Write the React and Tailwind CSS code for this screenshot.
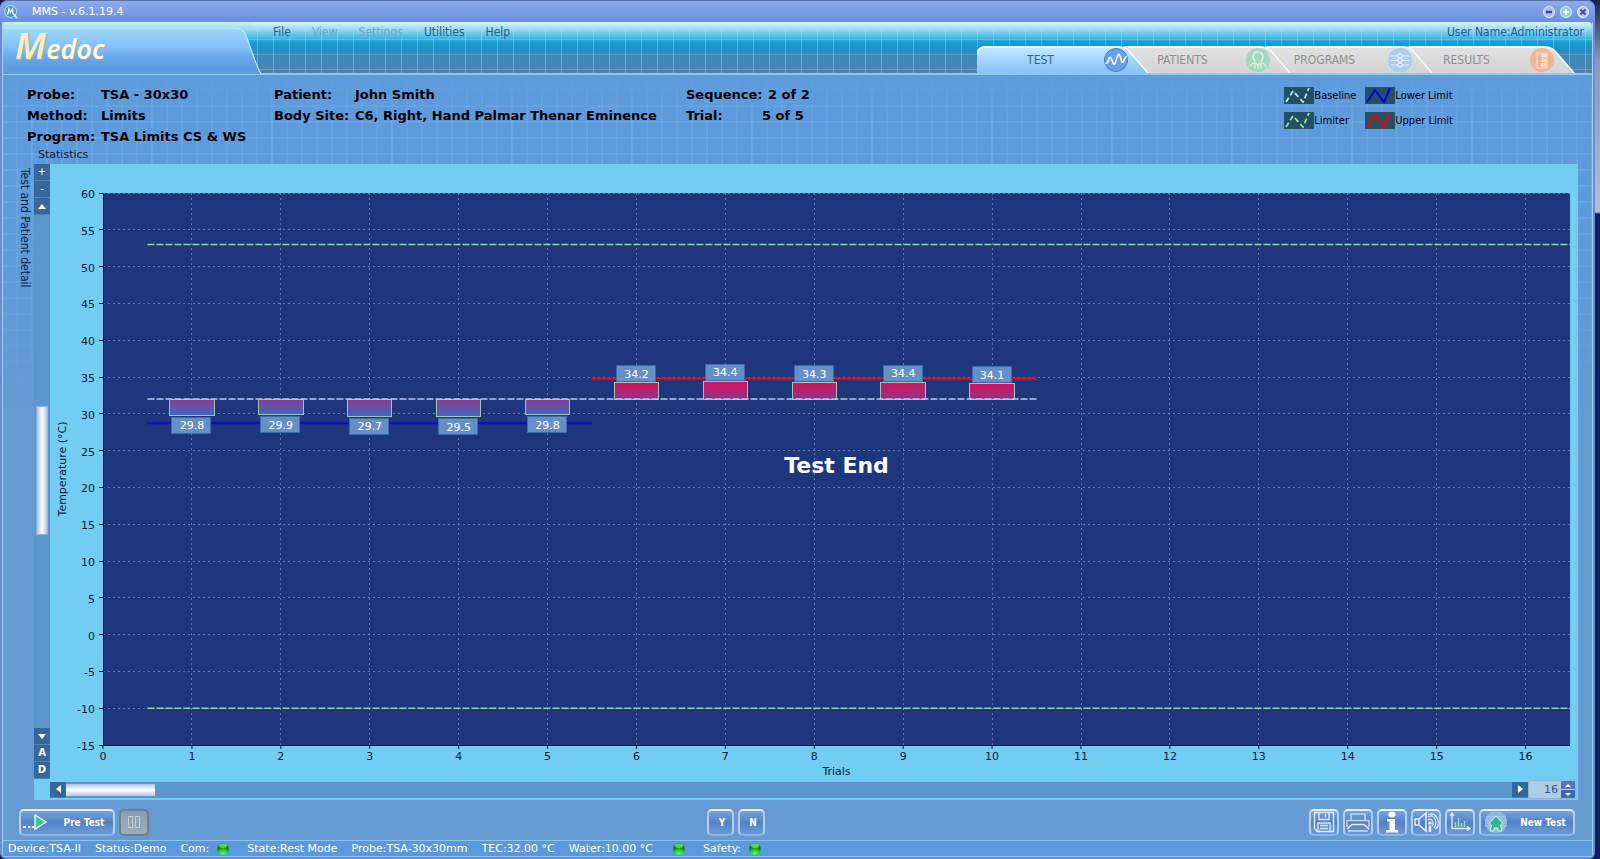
import { useState } from 'react';

const Y_MAX = 60;
const Y_MIN = -15;
const X_MAX = 16.5;

const px = (v) => `${(v / X_MAX) * 100}%`;
const py = (v) => `${((Y_MAX - v) / (Y_MAX - Y_MIN)) * 100}%`;

const yTicks = [60, 55, 50, 45, 40, 35, 30, 25, 20, 15, 10, 5, 0, -5, -10, -15];
const xTicks = [0, 1, 2, 3, 4, 5, 6, 7, 8, 9, 10, 11, 12, 13, 14, 15, 16];

const trials = [
  { n: 1, label: '29.8', value: 29.8 },
  { n: 2, label: '29.9', value: 29.9 },
  { n: 3, label: '29.7', value: 29.7 },
  { n: 4, label: '29.5', value: 29.6 },
  { n: 5, label: '29.8', value: 29.9 },
  { n: 6, label: '34.2', value: 34.2 },
  { n: 7, label: '34.4', value: 34.4 },
  { n: 8, label: '34.3', value: 34.2 },
  { n: 9, label: '34.4', value: 34.3 },
  { n: 10, label: '34.1', value: 34.1 },
];
const BASELINE = 32;

const menus = [
  { name: 'File' },
  { name: 'View', disabled: true },
  { name: 'Settings', disabled: true },
  { name: 'Utilities' },
  { name: 'Help' },
];

// Title bar ---------------------------------------------------------------

function WindowButton({ label, glow, children }) {
  return (
    <button aria-label={label} className="w-3 h-3">
      <svg viewBox="0 0 12 12" className="w-3 h-3">
        <circle cx="6" cy="6" r="5.5" fill={glow} stroke="#e8f0ff" />
        {children}
      </svg>
    </button>
  );
}

function TitleBar() {
  return (
    <div className="h-[22px] rounded-t-lg border-t border-[#5870a8] bg-linear-to-b from-[#8cabea] to-[#688fdf] flex items-center pl-1 pr-[6px]">
      <svg viewBox="0 0 14 14" className="w-[14px] h-[14px]">
        <circle cx="6.5" cy="6.5" r="6" fill="#3d9fb8" stroke="#bfe6ee" />
        <path d="M3.5 9.5 L5 4 L6.5 7.5 L8.5 4 L9 9" fill="none" stroke="#fff" strokeWidth="1.4" />
        <path d="M9.5 9 L13 13" stroke="#dff2f6" strokeWidth="1.6" />
      </svg>
      <h1 className="ml-[14px] text-[11px] leading-none font-medium text-white">MMS - v.6.1.19.4</h1>
      <div className="ml-auto flex gap-[5px]">
        <WindowButton label="Minimize" glow="#b4bcec">
          <path d="M3 6 H9" stroke="#2f4aa0" strokeWidth="2.4" />
        </WindowButton>
        <WindowButton label="Maximize" glow="#86d4d8">
          <path d="M3 6 H9 M6 3 V9" stroke="#fff" strokeWidth="1.8" />
        </WindowButton>
        <WindowButton label="Close" glow="#c2c8ee">
          <path d="M3.5 3.5 L8.5 8.5 M8.5 3.5 L3.5 8.5" stroke="#3c4da0" strokeWidth="2" />
        </WindowButton>
      </div>
    </div>
  );
}

// Header ------------------------------------------------------------------

function Logo() {
  return (
    <div className="relative w-[262px] h-[52px] shrink-0">
      <svg viewBox="0 0 262 52" className="absolute inset-0 w-full h-full">
        <defs>
          <linearGradient id="logoBg" x1="0" y1="0" x2="0" y2="1">
            <stop offset="0" stopColor="#9fd8fb" />
            <stop offset="0.45" stopColor="#80bdf8" />
            <stop offset="0.65" stopColor="#66a8ee" />
            <stop offset="0.85" stopColor="#5d9bdd" />
            <stop offset="1" stopColor="#5f9ddd" />
          </linearGradient>
          <linearGradient id="logoTop" x1="0" y1="0" x2="0" y2="1">
            <stop offset="0" stopColor="#c9f5fb" />
            <stop offset="1" stopColor="#8fdcf4" />
          </linearGradient>
        </defs>
        <path d="M0 0 H250 V6 H0 Z" fill="url(#logoTop)" opacity="0.6" />
        <path d="M0 52 V6 H232 C239 6 241 9 244 16 C248 27 252 41 258 52 Z" fill="url(#logoBg)" />
        <path d="M0 6 H232 C239 6 241 9 244 16 C248 27 252 41 258 52" fill="none" stroke="#b9ecfa" strokeWidth="1.2" />
      </svg>
      <p className="relative pl-3 pt-1 font-['Noto_Sans','Open_Sans',sans-serif] font-semibold italic text-[27px] leading-10 text-[#fbfaf0] [text-shadow:1px_1px_1px_#b3a77e]">
        <span className="text-[36px] text-[#f4efcb]">M</span>edoc
      </p>
    </div>
  );
}

function WaveIcon() {
  return (
    <svg viewBox="0 0 24 24" className="w-6 h-6 shrink-0">
      <circle cx="12" cy="12" r="11.5" fill="#67a2e4" stroke="#4a7fc4" />
      <path d="M1.500 15 Q3.500 16 4.500 12 T7 10 L9.500 16 Q10.500 17 11.500 14 L14 7 Q15 5 16 8 L18 14 Q19 16 20.500 11 L22.500 8" fill="none" stroke="#fff" strokeWidth="1.5" />
    </svg>
  );
}

function PatientIcon() {
  return (
    <svg viewBox="0 0 24 24" className="w-6 h-6 shrink-0">
      <circle cx="12" cy="12" r="12" fill="#a2d8ba" />
      <path d="M4 19 C4 15 9 16 9 13 C6 10 6 4 12 4 S18 10 15 13 C15 16 20 15 20 19 M9 15 V21 M15 15 V21 M10 15 L12 18 L14 15 M12 18 V21" fill="none" stroke="#dff3e6" strokeWidth="1.3" />
    </svg>
  );
}

function ProgramIcon() {
  return (
    <svg viewBox="0 0 24 24" className="w-6 h-6 shrink-0">
      <circle cx="12" cy="12" r="12" fill="#a9cdec" />
      <path d="M3 8 H21 M3 12.500 H21 M3 17 H21 M12 4 V20" fill="none" stroke="#e2f0fb" strokeWidth="1" />
      <path d="M10 6.500 H14 V9.500 H10 Z M10 11 H14 V14 H10 Z M10 15.500 H14 V18.500 H10 Z" fill="#a9cdec" stroke="#e8f4fc" strokeWidth="1" />
    </svg>
  );
}

function ResultIcon() {
  return (
    <svg viewBox="0 0 24 24" className="w-6 h-6 shrink-0">
      <circle cx="12" cy="12" r="12" fill="#f1b594" />
      <path d="M7 5 H17 V20 H7 Z" fill="none" stroke="#f8dccd" strokeWidth="1.2" />
      <path d="M12 6.500 H15.500 V9 H12 Z M12 11 H15.500 V13.500 H12 Z M12 15.500 H15.500 V18 H12 Z" fill="#f6cdb6" stroke="#fdf0e8" strokeWidth="1" />
    </svg>
  );
}

const tabs = [
  { name: 'TEST', Icon: WaveIcon, layer: 'z-40' },
  { name: 'PATIENTS', Icon: PatientIcon, layer: 'z-30' },
  { name: 'PROGRAMS', Icon: ProgramIcon, layer: 'z-20' },
  { name: 'RESULTS', Icon: ResultIcon, layer: 'z-10' },
];

function Tabs() {
  const [active, setActive] = useState('TEST');
  return (
    <nav className="flex pr-[47px]">
      {tabs.map(({ name, Icon, layer }) => (
        <button
          key={name}
          onClick={() => setActive(name)}
          className={`relative flex items-center w-[142px] h-[27px] ${layer} ${active === name ? 'text-[#1f66a8]' : 'text-[#8e8e8e]'}`}
        >
          <svg viewBox="0 0 172 27" className="absolute left-0 top-0 w-[172px] h-[27px]">
            <defs>
              <linearGradient id="tabOn" x1="0" y1="0" x2="0" y2="1">
                <stop offset="0" stopColor="#c6ecff" />
                <stop offset="1" stopColor="#84c2fb" />
              </linearGradient>
              <linearGradient id="tabOff" x1="0" y1="0" x2="0" y2="1">
                <stop offset="0" stopColor="#e2e2e2" />
                <stop offset="1" stopColor="#d4d4d4" />
              </linearGradient>
            </defs>
            <path d="M0 27 V8 Q0 0 8 0 H142 Q148 1 152 5 L171 27 Z" fill={active === name ? 'url(#tabOn)' : 'url(#tabOff)'} />
            <path d="M1 8 Q1 1 8 1 H142 Q148 1 152 5 L171 27" fill="none" stroke="#f4fbff" strokeWidth="1.5" />
          </svg>
          <span className="relative w-[127px] shrink-0 text-center text-xs font-['DejaVu_Sans_Condensed','DejaVu_Sans',sans-serif]">{name}</span>
          <span className="relative shrink-0"><Icon /></span>
        </button>
      ))}
    </nav>
  );
}

function Header() {
  return (
    <header className="flex h-[53px] rounded-t border-b-2 border-[#8fc9f2] bg-[repeating-linear-gradient(90deg,transparent_0px_14px,#b4e6fa55_14px_15px,transparent_15px_16px),linear-gradient(180deg,transparent_0px_17px,#8ad8f066_17px_18px,transparent_18px_32px,#8ec4e466_32px_33px,transparent_33px_47px,#8ec4e466_47px_48px,transparent_48px),linear-gradient(180deg,#d6f6fb_0px,#a5def4_6px,#45b8e2_16px,#17a0d6_20px,#1f92c8_25px,#4287b8_38px,#5380ab_52px)]">
      <Logo />
      <div className="flex-1 flex flex-col justify-between">
        <div className="flex justify-between pr-2 text-xs leading-5">
          <ul className="flex gap-[21px] pl-2 text-[#1f5f8c] font-['DejaVu_Sans_Condensed','DejaVu_Sans',sans-serif]">
            {menus.map((m) => (
              <li key={m.name}>
                <button disabled={m.disabled} className="disabled:text-[#6aa9c6]">{m.name}</button>
              </li>
            ))}
          </ul>
          <p className="text-[#1c5c9c] font-['DejaVu_Sans_Condensed','DejaVu_Sans',sans-serif]">User Name:Administrator</p>
        </div>
        <div className="flex justify-end"><Tabs /></div>
      </div>
    </header>
  );
}

// Test and patient details --------------------------------------------------

function Details({ rows, labelWidth, className }) {
  return (
    <dl className={className}>
      {rows.map(([label, value]) => (
        <div key={label} className="flex">
          <dt className={`${labelWidth} shrink-0`}>{label}</dt>
          <dd className="whitespace-nowrap">{value}</dd>
        </div>
      ))}
    </dl>
  );
}

function LegendItem({ color, dashed, children }) {
  return (
    <li className="flex items-center">
      <svg viewBox="0 0 30 17" className="w-[30px] h-[17px] bg-[#235062]">
        <path
          d={dashed ? 'M2 15 L9 4 L19 15 L25 1' : 'M2 15 L10 3 L19 15 L25 1'}
          fill="none"
          stroke={color}
          strokeWidth={dashed ? 1.7 : 2}
          strokeDasharray={dashed ? '5 3' : undefined}
        />
      </svg>
      {children}
    </li>
  );
}

function InfoArea() {
  return (
    <section className="h-[89px] flex pl-6 pt-[9px] font-bold text-[13px] leading-[21px] text-black">
      <Details
        className="w-[247px] shrink-0"
        labelWidth="w-[74px]"
        rows={[['Probe:', 'TSA - 30x30'], ['Method:', 'Limits'], ['Program:', 'TSA Limits CS & WS']]}
      />
      <Details
        className="w-[412px] shrink-0"
        labelWidth="w-[81px]"
        rows={[['Patient:', 'John Smith'], ['Body Site:', 'C6, Right, Hand Palmar Thenar Eminence']]}
      />
      <dl>
        <div className="flex"><dt className="w-[82px]">Sequence:</dt><dd>2 of 2</dd></div>
        <div className="flex"><dt className="w-[76px]">Trial:</dt><dd>5 of 5</dd></div>
      </dl>
      <ul className="ml-auto mr-[139px] mt-[3px] grid grid-cols-[81px_auto] auto-rows-[17px] gap-y-2 text-[11px] leading-[17px] font-normal whitespace-nowrap font-['DejaVu_Sans_Condensed','DejaVu_Sans',sans-serif]">
        <LegendItem color="#d5e8ee" dashed>Baseline</LegendItem>
        <LegendItem color="#0000f0">Lower Limit</LegendItem>
        <LegendItem color="#8ff0a0" dashed>Limiter</LegendItem>
        <LegendItem color="#f00000">Upper Limit</LegendItem>
      </ul>
    </section>
  );
}

// Chart -----------------------------------------------------------------------

function Chart() {
  return (
    <figure className="flex-1 flex pl-[53px] pr-2 pt-[29px] pb-[34px]">
      <svg className="flex-1 min-h-[400px] bg-[#1e367c] overflow-visible text-[11px]" role="img" aria-label="Temperature by trial">
        <defs>
          <linearGradient id="cold" x1="0" y1="0" x2="0" y2="1">
            <stop offset="0" stopColor="#8e3c8c" />
            <stop offset="1" stopColor="#3a68c0" />
          </linearGradient>
          <linearGradient id="warm" x1="0" y1="0" x2="0" y2="1">
            <stop offset="0" stopColor="#d6125c" />
            <stop offset="1" stopColor="#8e3488" />
          </linearGradient>
        </defs>

        <g stroke="#7f92c8" strokeDasharray="2 3" opacity="0.7" shapeRendering="crispEdges">
          {yTicks.slice(0, -1).map((t) => <line key={t} x1="0" x2="100%" y1={py(t)} y2={py(t)} />)}
          {xTicks.slice(1).map((t) => <line key={t} y1="0" y2="100%" x1={px(t)} x2={px(t)} />)}
        </g>

        <g stroke="#0c1430" shapeRendering="crispEdges">
          <line x1="0" x2="0" y1="0" y2="100%" />
          <line x1="0" x2="100%" y1="100%" y2="100%" />
          {yTicks.map((t) => <line key={t} x1="-4" x2="0" y1={py(t)} y2={py(t)} />)}
        </g>

        <g fill="#0a1a33">
          {yTicks.map((t) => (
            <text key={t} x="-8" y={py(t)} dy="5" textAnchor="end">{t}</text>
          ))}
          {xTicks.map((t) => (
            <svg key={t} x={px(t)} y="100%" className="overflow-visible">
              <line y2="4" stroke="#0c1430" />
              <text y="15" textAnchor="middle">{t}</text>
            </svg>
          ))}
          <svg x="50%" y="100%" className="overflow-visible">
            <text y="30" textAnchor="middle">Trials</text>
          </svg>
          <svg x="0" y="50%" className="overflow-visible">
            <text transform="translate(-37 0) rotate(-90)" textAnchor="middle">Temperature (°C)</text>
          </svg>
        </g>

        <g>
          <line x1={px(0.5)} x2="100%" y1={py(53)} y2={py(53)} stroke="#90d8a8" strokeWidth="1.5" strokeDasharray="7 2" />
          <line x1={px(0.5)} x2="100%" y1={py(-10)} y2={py(-10)} stroke="#90d8a8" strokeWidth="1.5" strokeDasharray="7 2" />
          <line x1={px(0.5)} x2={px(5.5)} y1={py(28.7)} y2={py(28.7)} stroke="#0808e0" strokeWidth="2" />
          <line x1={px(5.5)} x2={px(10.5)} y1={py(34.8)} y2={py(34.8)} stroke="#ee0a14" strokeWidth="2" />
        </g>

        {trials.map(({ n, label, value }) => {
          const cold = value < BASELINE;
          const top = Math.max(value, BASELINE);
          const span = Math.abs(value - BASELINE);
          return (
            <g key={n}>
              <rect
                x={px(n - 0.25)}
                y={py(top)}
                width={px(0.5)}
                height={`${(span / (Y_MAX - Y_MIN)) * 100}%`}
                fill={cold ? 'url(#cold)' : 'url(#warm)'}
                stroke="#9ec8b4"
                shapeRendering="crispEdges"
              />
              <svg x={px(n)} y={py(value)} className="overflow-visible">
                <rect x="-20" y={cold ? 2 : -17} width="39" height="16" fill="#668fc6" stroke="#3f69ae" shapeRendering="crispEdges" />
                <text y={cold ? 14 : -5} textAnchor="middle" fill="#fff">{label}</text>
              </svg>
            </g>
          );
        })}
        <line x1={px(0.5)} x2={px(10.5)} y1={py(BASELINE)} y2={py(BASELINE)} stroke="#b8c8ea" strokeWidth="1.5" strokeDasharray="7 2" />

        <text x="50%" y="50%" dy="4" textAnchor="middle" fill="#fff" fontSize="22" fontWeight="bold">Test End</text>
      </svg>
    </figure>
  );
}

function ScrollButton({ label, className = 'h-[17px]', children }) {
  return (
    <button aria-label={label} className={`w-4 shrink-0 flex items-center justify-center bg-[#36679b] border-b border-[#5083b4] text-white text-[10px] leading-none ${className}`}>
      {children}
    </button>
  );
}

function VerticalScroll() {
  return (
    <div className="w-4 flex flex-col bg-[#5a98cb]">
      <ScrollButton label="Zoom in">+</ScrollButton>
      <ScrollButton label="Zoom out">-</ScrollButton>
      <ScrollButton label="Scroll up">
        <svg viewBox="0 0 8 5" className="w-2 h-[5px]"><path d="M0 5 L4 0 L8 5 Z" fill="#fff" /></svg>
      </ScrollButton>
      <div className="flex-1 flex flex-col items-center">
        <div className="grow-[192]" />
        <div className="grow-[128] w-3 border border-[#8fb4e0] bg-linear-to-r from-[#a9c2ea] via-white to-[#b4c6ec]" />
        <div className="grow-[194]" />
      </div>
      <ScrollButton label="Scroll down">
        <svg viewBox="0 0 8 5" className="w-2 h-[5px]"><path d="M0 0 L4 5 L8 0 Z" fill="#fff" /></svg>
      </ScrollButton>
      <ScrollButton label="Auto scale"><b>A</b></ScrollButton>
      <ScrollButton label="Default scale"><b>D</b></ScrollButton>
    </div>
  );
}

function HorizontalScroll() {
  const [count, setCount] = useState(16);
  return (
    <div className="h-[21px] flex items-center pl-4 pr-[2px]">
      <div className="flex-1 flex h-4 bg-[#5a98cb]">
        <ScrollButton label="Scroll left" className="h-4">
          <svg viewBox="0 0 5 8" className="w-[5px] h-2"><path d="M5 0 L0 4 L5 8 Z" fill="#fff" /></svg>
        </ScrollButton>
        <div className="w-[6%] my-[2px] bg-linear-to-b from-[#a9c2ea] via-white to-[#b4c6ec]" />
        <div className="flex-1" />
        <ScrollButton label="Scroll right" className="h-4">
          <svg viewBox="0 0 5 8" className="w-[5px] h-2"><path d="M0 0 L5 4 L0 8 Z" fill="#fff" /></svg>
        </ScrollButton>
      </div>
      <div className="flex items-center h-[19px] w-12 rounded bg-[#b0cce4] border border-[#8fb6d8]">
        <input
          aria-label="Visible trials"
          value={count}
          onChange={(e) => setCount(Number(e.target.value) || 0)}
          className="flex-1 min-w-0 pr-[3px] text-right text-[11px] leading-none text-[#34509a]"
        />
        <div className="flex flex-col w-[14px] gap-px">
          <button aria-label="More" onClick={() => setCount(count + 1)} className="h-2 flex items-center justify-center bg-[#5677bd]">
            <svg viewBox="0 0 6 3" className="w-[6px] h-[3px]"><path d="M0 3 L3 0 L6 3 Z" fill="#fff" /></svg>
          </button>
          <button aria-label="Fewer" onClick={() => setCount(count - 1)} className="h-2 flex items-center justify-center bg-[#4468b0]">
            <svg viewBox="0 0 6 3" className="w-[6px] h-[3px]"><path d="M0 0 L3 3 L6 0 Z" fill="#fff" /></svg>
          </button>
        </div>
      </div>
    </div>
  );
}

// Toolbar ---------------------------------------------------------------------

function ToolButton({ label, className = 'w-[30px]', children }) {
  return (
    <button
      aria-label={label}
      className={`h-[27px] flex items-center justify-center rounded-[5px] border-2 border-t-[#e4f0fc] border-x-[#b4d0ee] border-b-[#8fb4e0] bg-linear-to-b from-[#75a5dc] via-[#5282c6] to-[#6c9cd8] text-white text-[10px] font-bold font-['DejaVu_Sans_Condensed','DejaVu_Sans',sans-serif] ${className}`}
    >
      {children}
    </button>
  );
}

function Toolbar() {
  return (
    <div className="h-10 grid grid-cols-[688fr_869fr] items-center pl-4 pr-[17px] pt-1">
      <div className="flex gap-1">
        <ToolButton className="w-24 gap-4 pr-2">
          <svg viewBox="0 0 26 16" className="w-[26px] h-4">
            <path d="M1 13 H4 M6 13 H8.500 M10 13 H12" stroke="#e4f0fb" strokeWidth="2" />
            <path d="M13 1 L24 8 L13 15 Z" fill="#3cc88c" stroke="#f0fbff" strokeWidth="1.4" />
          </svg>
          Pre Test
        </ToolButton>
        <button aria-label="Pause" disabled className="w-[30px] h-[27px] flex items-center justify-center rounded-[5px] border-2 border-[#6f7f90] bg-linear-to-b from-[#8c9eae] to-[#9eaeba]">
          <svg viewBox="0 0 14 14" className="w-[14px] h-[14px]">
            <path d="M1.500 1.500 H5.500 V12.500 H1.500 Z M8.500 1.500 H12.500 V12.500 H8.500 Z" fill="#93a4b1" stroke="#c3ced6" />
          </svg>
        </button>
      </div>
      <div className="flex justify-between">
        <div className="flex gap-1">
          <ToolButton className="w-[27px] pl-1">Y</ToolButton>
          <ToolButton className="w-[27px] pl-1">N</ToolButton>
        </div>
        <div className="flex gap-1">
          <ToolButton label="Save">
            <svg viewBox="0 0 22 22" className="w-[22px] h-[22px]" fill="none" stroke="#dceafa" strokeWidth="1.4">
              <path d="M1.500 1.500 H20.500 V20.500 H4.500 L1.500 17.500 Z" />
              <path d="M6 2 V8.500 H16 V2 M12.500 3 V6.500" />
              <path d="M5 20 V12 H17 V20" />
              <path d="M7 14.500 H15 M7 17.500 H15" />
            </svg>
          </ToolButton>
          <ToolButton label="Print">
            <svg viewBox="0 0 24 20" className="w-6 h-5" fill="none" stroke="#c2d4ea" strokeWidth="1.6">
              <path d="M5 8 V2 H19 V8" />
              <path d="M1 8.500 H23 M1 8 V15 M23 8 V15" />
              <path d="M1 17 L6 12.500 H18 L23 17" stroke="#e2edf8" />
              <path d="M2 19 H22" />
            </svg>
          </ToolButton>
          <ToolButton label="Information">
            <svg viewBox="0 0 16 22" className="w-4 h-[22px]" fill="#fff">
              <ellipse cx="8" cy="3.500" rx="3.500" ry="3" />
              <path d="M3 8 H11 V19 H14 V21.500 H2 V19 H5.500 V10.500 H3 Z" />
            </svg>
          </ToolButton>
          <ToolButton label="Sound">
            <svg viewBox="0 0 26 22" className="w-[26px] h-[22px]" fill="none" stroke="#e6f0fb" strokeWidth="1.5">
              <path d="M2 8 H6 V14 H2 Z M6 8 L13 2 V20 L6 14" />
              <path d="M15 9 Q18 7 19.500 10 T19 15 M15 6 Q20 3 22 8 T21 17 M15 3.500 Q22 1 24.500 8 T22.500 18" strokeWidth="1.2" />
              <circle cx="17" cy="12" r="1.800" fill="#e6f0fb" stroke="none" />
              <path d="M17 14.500 V21" strokeWidth="2.5" />
            </svg>
          </ToolButton>
          <ToolButton label="Graph">
            <svg viewBox="0 0 24 20" className="w-6 h-5" fill="none" stroke="#e2edf9" strokeWidth="1.3">
              <path d="M4 2 V16.500 H21 M2 4 L4 1 L6 4 M19 14.500 L22 16.500 L19 18.500" />
              <path d="M7.500 15 V10 M10.500 15 V6 M13.500 15 V11 M16.500 15 V9" stroke="#a8dcd8" />
            </svg>
          </ToolButton>
          <ToolButton className="w-24 gap-3 pr-1">
            <svg viewBox="0 0 24 22" className="w-6 h-[22px]">
              <circle cx="12" cy="11" r="11" fill="#8fb8e2" />
              <path d="M2 6 H22 M1 9 H23 M1 12 H23 M1 15 H23 M3 18 H21" stroke="#a8cbeb" strokeWidth="0.8" />
              <path d="M12 5 L19 12.500 L16.500 14 L18 20 H14 V17 H10 V20 H6 L7.500 14 L5 12.500 Z" fill="#34b496" stroke="#d8f6f0" />
            </svg>
            New Test
          </ToolButton>
        </div>
      </div>
    </div>
  );
}

// Status bar --------------------------------------------------------------------

function Led() {
  return (
    <svg viewBox="0 0 12 12" className="w-3 h-3 shrink-0">
      <defs>
        <radialGradient id="led" cx="0.5" cy="0.95" r="0.8">
          <stop offset="0" stopColor="#6cff60" />
          <stop offset="0.45" stopColor="#2ad42c" />
          <stop offset="0.8" stopColor="#0a7a14" />
        </radialGradient>
      </defs>
      <circle cx="6" cy="6" r="5.800" fill="url(#led)" />
      <ellipse cx="6" cy="2.800" rx="4" ry="2.200" fill="#6af05e" opacity="0.8" />
    </svg>
  );
}

function StatusBar() {
  return (
    <footer className="h-[17px] flex items-center gap-[14px] pl-[5px] border-y border-[#8cc4f0] bg-[#5c98dc] text-[11px] leading-none text-white whitespace-nowrap">
      <span>Device:TSA-II</span>
      <span>Status:Demo</span>
      <span className="flex items-center gap-2 mr-1">Com: <Led /></span>
      <span>State:Rest Mode</span>
      <span>Probe:TSA-30x30mm</span>
      <span>TEC:32.00 °C</span>
      <span className="flex items-center gap-5 mr-1">Water:10.00 °C <Led /></span>
      <span className="flex items-center gap-2">Safety: <Led /></span>
    </footer>
  );
}

export default function App() {
  return (
    <div className="min-h-screen flex bg-[#0c1f52] font-['DejaVu_Sans',Verdana,sans-serif]">
      <div className="flex-1 min-w-0 flex flex-col rounded-t-lg rounded-b-md bg-[#648cdc] pb-[2px]">
        <TitleBar />
        <div className="flex-1 flex flex-col mx-[2px] border-x border-[#a5d2f6] rounded-b">
          <Header />
          <main className="flex-1 flex flex-col bg-[linear-gradient(180deg,#5d9bdc_0px,#5d9bdc00_50px,#5d9bdc00_120px,#659ad3_340px),repeating-linear-gradient(90deg,transparent_0px_13px,#72aee677_13px_15px),repeating-linear-gradient(180deg,transparent_0px_14px,#72aee677_14px_16px),linear-gradient(180deg,#5d9bdc,#5d9bdc)]">
            <InfoArea />
            <div className="flex-1 flex pr-[14px]">
              <p className="w-[31px] pt-1 text-xs leading-[14px] pr-[2px] text-[#0b2340] [writing-mode:vertical-rl] font-['DejaVu_Sans_Condensed','DejaVu_Sans',sans-serif]">Test and Patient detail</p>
              <div className="relative flex-1 flex flex-col bg-[#73ccf2]">
                <p className="absolute left-1 -top-4 text-[11px] leading-[14px] text-[#0b1a30]">Statistics</p>
                <div className="flex-1 flex">
                  <VerticalScroll />
                  <Chart />
                </div>
                <HorizontalScroll />
              </div>
            </div>
            <Toolbar />
          </main>
          <StatusBar />
        </div>
      </div>
      {/* strip of the desktop to the right of the window */}
      <div className="w-[5px] bg-[linear-gradient(180deg,#1a2348_0px,#8c98b8_60px,#b8bccc_212px,#0c2060_214px)]" />
    </div>
  );
}
